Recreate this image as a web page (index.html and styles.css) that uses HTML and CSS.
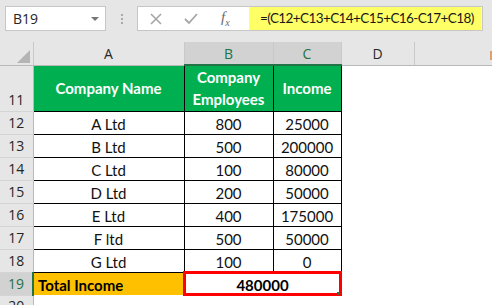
FILE: index.html
```html
<!DOCTYPE html>
<html lang="en">
<head>
  <meta charset="UTF-8">
  <title>Total Income</title>
  <link rel="stylesheet" href="styles.css">
</head>
<body>
  <!-- formula bar -->
  <div class="bar">
    <div class="name-box">
      <span>B19</span>
      <span class="arrow"></span>
    </div>
    <div class="dots"><i></i><i></i><i></i></div>
    <div class="input-box">
      <div class="fx-icons">
        <svg class="ic-x" width="14" height="14" viewBox="0 0 14 14"><path d="M2 2 L12 12 M12 2 L2 12" stroke="#a6a6a6" stroke-width="1.6" fill="none"/></svg>
        <svg class="ic-ok" width="16" height="14" viewBox="0 0 16 14"><path d="M2 7 L6 11 L14 2" stroke="#a6a6a6" stroke-width="1.8" fill="none"/></svg>
        <span class="fx">f<sub>x</sub></span>
      </div>
      <div class="formula">=(C12+C13+C14+C15+C16-C17+C18)</div>
    </div>
  </div>

  <!-- sheet -->
  <table class="sheet">
    <colgroup>
      <col class="c-hdr">
      <col class="c-a">
      <col class="c-b">
      <col class="c-c">
      <col class="c-d">
      <col>
    </colgroup>
    <tr class="col-hdr">
      <th class="corner"><span class="tri"></span></th>
      <th>A</th>
      <th class="sel">B</th>
      <th class="sel">C</th>
      <th>D</th>
      <th class="cut"><span class="peek"></span></th>
    </tr>
    <tr class="head-row">
      <th class="row-hdr">11</th>
      <td class="green">Company Name</td>
      <td class="green">Company<br>Employees</td>
      <td class="green">Income</td>
      <td class="blank"></td><td class="blank"></td>
    </tr>
    <tr><th class="row-hdr">12</th><td class="cell">A Ltd</td><td class="cell">800</td><td class="cell">25000</td><td class="blank"></td><td class="blank"></td></tr>
    <tr><th class="row-hdr">13</th><td class="cell">B Ltd</td><td class="cell">500</td><td class="cell">200000</td><td class="blank"></td><td class="blank"></td></tr>
    <tr><th class="row-hdr">14</th><td class="cell">C Ltd</td><td class="cell">100</td><td class="cell">80000</td><td class="blank"></td><td class="blank"></td></tr>
    <tr><th class="row-hdr">15</th><td class="cell">D Ltd</td><td class="cell">200</td><td class="cell">50000</td><td class="blank"></td><td class="blank"></td></tr>
    <tr><th class="row-hdr">16</th><td class="cell">E Ltd</td><td class="cell">400</td><td class="cell">175000</td><td class="blank"></td><td class="blank"></td></tr>
    <tr><th class="row-hdr">17</th><td class="cell">F ltd</td><td class="cell">500</td><td class="cell">50000</td><td class="blank"></td><td class="blank"></td></tr>
    <tr><th class="row-hdr">18</th><td class="cell">G Ltd</td><td class="cell">100</td><td class="cell">0</td><td class="blank"></td><td class="blank"></td></tr>
    <tr>
      <th class="row-hdr sel-row">19</th>
      <td class="total-label">Total Income</td>
      <td class="total" colspan="2">480000<span class="handle"></span></td>
      <td class="blank"></td><td class="blank"></td>
    </tr>
    <tr class="last"><th class="row-hdr">20</th><td class="blank"></td><td class="blank"></td><td class="blank"></td><td class="blank"></td><td class="blank"></td></tr>
  </table>
</body>
</html>
```

FILE: styles.css
```css
body {
  margin: 0;
  width: 492px;
  height: 305px;
  overflow: hidden;
  background-color: #fff;
  font-family: "Lato", "Open Sans", sans-serif;
}

/* formula bar */
.bar {
  height: 42px;
  background-color: #e6e6e6;
  display: flex;
  align-items: flex-start;
  padding: 6px 9px 0 5px;
  box-sizing: border-box;
}
.name-box {
  flex: none;
  width: 101px;
  height: 25px;
  box-sizing: border-box;
  background-color: #fff;
  border: 1px solid #c6c6c6;
  display: flex;
  align-items: center;
  justify-content: space-between;
  padding: 0 6px 0 7px;
  font-family: "Open Sans", sans-serif;
  font-size: 14px;
  color: #262626;
}
.arrow {
  width: 0;
  height: 0;
  border-left: 4px solid transparent;
  border-right: 4px solid transparent;
  border-top: 4px solid #777;
}
.dots {
  flex: none;
  width: 31px;
  display: flex;
  flex-direction: column;
  align-items: center;
  gap: 2px;
  padding-top: 8px;
}
.dots i {
  width: 2px;
  height: 2px;
  background-color: #a9a9a9;
}
.input-box {
  flex: 1;
  min-width: 0;
  height: 25px;
  box-sizing: border-box;
  background-color: #fff;
  border: 1px solid #c6c6c6;
  display: flex;
}
.fx-icons {
  flex: none;
  width: 111px;
  display: flex;
  align-items: center;
  padding-left: 11px;
  box-sizing: border-box;
}
.ic-ok {
  margin-left: 20px;
}
.fx {
  margin-left: 22px;
  font-family: "Liberation Serif", serif;
  font-style: italic;
  font-size: 15px;
  color: #6b6b6b;
}
.fx sub {
  font-size: 10px;
}
.formula {
  flex: 1;
  min-width: 0;
  margin: 0 1px 0 0;
  background-color: #ffff66;
  font-size: 13.5px;
  letter-spacing: -0.6px;
  white-space: nowrap;
  overflow: hidden;
  line-height: 23px;
  padding-left: 11px;
  color: #1a1a1a;
}

/* sheet */
.sheet {
  border-collapse: collapse;
  table-layout: fixed;
  width: 492px;
  font-size: 15px;
}
.c-hdr { width: 33px; }
.c-a { width: 151px; }
.c-b { width: 89px; }
.c-c { width: 68px; }
.c-d { width: 73px; }

.col-hdr th {
  height: 21px;
  padding: 0;
  background-color: #e6e6e6;
  border-right: 1px solid #c9c9c9;
  border-bottom: 1px solid #b9b9b9;
  font-family: "Open Sans", sans-serif;
  font-weight: normal;
  font-size: 14px;
  color: #262626;
}
.col-hdr th.sel {
  background-color: #d2d2d2;
  color: #217346;
  border-bottom: 2px solid #217346;
}
.col-hdr th.cut {
  border-right: none;
  text-align: right;
}
.peek {
  display: inline-block;
  width: 2px;
  height: 9px;
  background-color: #d9a070;
  vertical-align: middle;
}
.corner {
  position: relative;
}
.tri {
  position: absolute;
  right: 3px;
  bottom: 2px;
  width: 0;
  height: 0;
  border-left: 13px solid transparent;
  border-bottom: 13px solid #b4b4b4;
}

.row-hdr {
  padding: 0 0 2px;
  background-color: #e6e6e6;
  border-right: 1px solid #b9b9b9;
  border-bottom: 1px solid #d4d4d4;
  font-family: "Open Sans", sans-serif;
  font-weight: normal;
  font-size: 14px;
  color: #262626;
  vertical-align: bottom;
}
.row-hdr.sel-row {
  background-color: #d2d2d2;
  color: #217346;
  border-right: 2px solid #217346;
}
.last .row-hdr {
  vertical-align: top;
  padding: 0;
}

tr { height: 23px; }
.head-row { height: 46px; }

.green {
  background-color: #00b050;
  color: #fff;
  font-weight: bold;
  text-align: center;
  line-height: 22px;
  border: 1px solid #000;
  padding: 0;
}
.cell {
  border: 1px solid #000;
  text-align: center;
  vertical-align: bottom;
  padding: 0 0 1px;
  color: #111;
}
.blank {
  padding: 0;
}
.total-label {
  background-color: #ffc000;
  font-weight: bold;
  padding: 0 0 1px 4px;
  vertical-align: bottom;
  color: #000;
}
.total {
  position: relative;
  font-weight: bold;
  text-align: center;
  vertical-align: bottom;
  padding: 0 0 1px;
  outline: 3px solid #ff0000;
  outline-offset: -2px;
  color: #000;
}
.handle {
  position: absolute;
  right: 1px;
  bottom: 0;
  width: 3px;
  height: 3px;
  background-color: #217346;
}
```
